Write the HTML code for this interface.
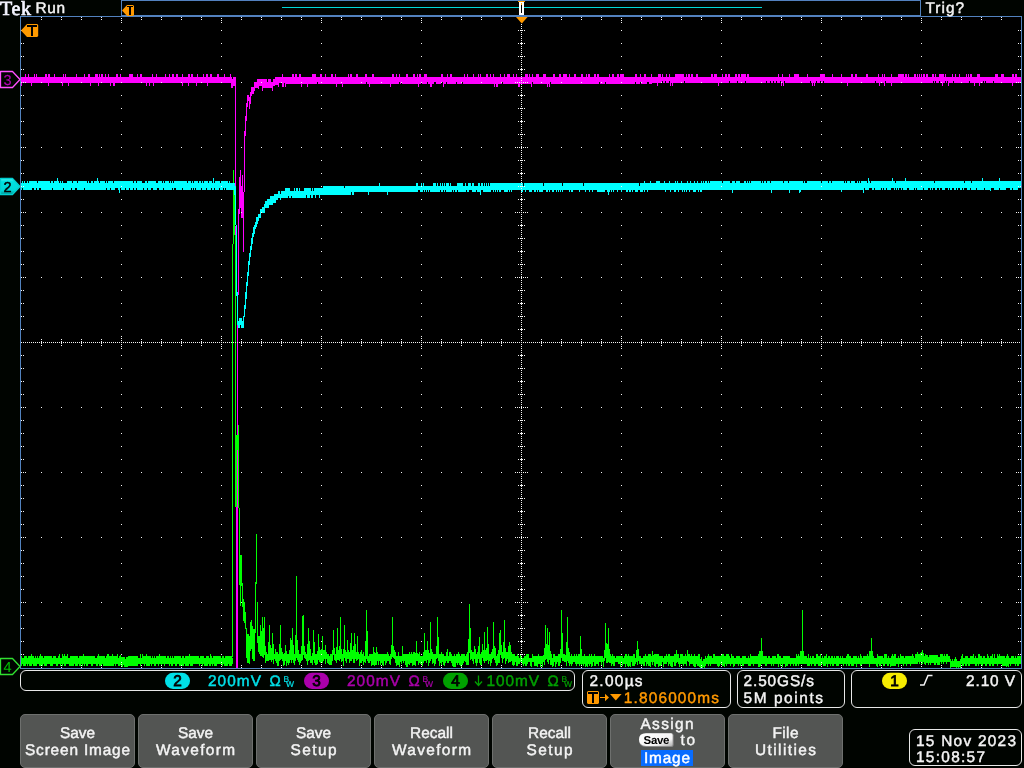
<!DOCTYPE html>
<html><head><meta charset="utf-8"><title>Tek</title>
<style>
html,body{margin:0;padding:0;background:#000400;overflow:hidden}
svg{display:block;font-family:"Liberation Sans",sans-serif;will-change:transform}
</style></head><body>
<svg width="1024" height="768" viewBox="0 0 1024 768" shape-rendering="crispEdges" text-rendering="geometricPrecision">
<rect x="21" y="17" width="1000" height="651" fill="#000"/>
<rect x="122" y="1" width="798" height="14" fill="#000300"/>
<g fill="none" stroke-width="1">
<path stroke="#00ff00" d="M21.5 656V666M22.5 658V664M23.5 658V666M24.5 656V666M25.5 656V666M26.5 656V664M27.5 658V666M28.5 656V664M29.5 656V666M30.5 656V666M31.5 654V666M32.5 656V664M33.5 656V666M34.5 658V666M35.5 656V666M36.5 658V666M37.5 656V664M38.5 658V664M39.5 656V666M40.5 654V666M41.5 656V666M42.5 656V666M43.5 658V664M44.5 656V666M45.5 656V666M46.5 656V666M47.5 656V664M48.5 656V664M49.5 656V664M50.5 656V666M51.5 656V666M52.5 658V666M53.5 656V664M54.5 656V664M55.5 656V664M56.5 658V666M57.5 658V666M58.5 656V664M59.5 654V664M60.5 658V666M61.5 658V664M62.5 654V666M63.5 656V664M64.5 654V666M65.5 656V666M66.5 656V664M67.5 654V664M68.5 658V664M69.5 658V666M70.5 656V666M71.5 656V666M72.5 656V666M73.5 656V666M74.5 656V664M75.5 656V666M76.5 656V666M77.5 656V666M78.5 658V664M79.5 656V666M80.5 656V666M81.5 656V664M82.5 656V666M83.5 654V664M84.5 656V666M85.5 656V664M86.5 656V666M87.5 656V666M88.5 656V664M89.5 656V664M90.5 656V664M91.5 656V666M92.5 656V666M93.5 656V664M94.5 656V664M95.5 658V664M96.5 658V666M97.5 656V666M98.5 654V664M99.5 656V666M100.5 656V666M101.5 656V666M102.5 656V664M103.5 656V666M104.5 656V666M105.5 658V666M106.5 656V666M107.5 654V666M108.5 654V666M109.5 656V666M110.5 656V666M111.5 656V666M112.5 654V666M113.5 656V666M114.5 656V664M115.5 656V666M116.5 656V664M117.5 654V664M118.5 658V666M119.5 656V666M120.5 655V665M121.5 657V667M122.5 657V667M123.5 657V665M124.5 657V667M125.5 659V667M126.5 657V667M127.5 657V667M128.5 656V666M129.5 656V666M130.5 656V666M131.5 656V666M132.5 656V666M133.5 656V666M134.5 656V666M135.5 656V666M136.5 656V666M137.5 656V666M138.5 658V664M139.5 658V664M140.5 654V666M141.5 658V664M142.5 654V664M143.5 656V664M144.5 656V666M145.5 656V664M146.5 654V666M147.5 656V666M148.5 656V666M149.5 656V666M150.5 656V664M151.5 658V666M152.5 656V664M153.5 658V664M154.5 656V666M155.5 658V666M156.5 656V664M157.5 656V664M158.5 656V666M159.5 654V664M160.5 656V664M161.5 656V666M162.5 656V664M163.5 656V664M164.5 656V666M165.5 656V664M166.5 658V664M167.5 656V664M168.5 656V664M169.5 658V666M170.5 656V664M171.5 658V666M172.5 656V666M173.5 658V664M174.5 656V664M175.5 656V666M176.5 656V666M177.5 656V664M178.5 656V664M179.5 656V666M180.5 656V666M181.5 658V666M182.5 656V666M183.5 656V666M184.5 658V664M185.5 656V666M186.5 656V666M187.5 656V666M188.5 656V666M189.5 654V664M190.5 656V666M191.5 656V666M192.5 656V666M193.5 656V664M194.5 656V664M195.5 656V664M196.5 656V664M197.5 656V664M198.5 656V664M199.5 658V666M200.5 656V664M201.5 656V664M202.5 656V666M203.5 656V664M204.5 658V666M205.5 658V666M206.5 656V666M207.5 656V666M208.5 656V664M209.5 658V666M210.5 654V666M211.5 656V664M212.5 658V666M213.5 656V664M214.5 656V666M215.5 656V666M216.5 656V666M217.5 656V664M218.5 656V664M219.5 656V664M220.5 656V664M221.5 658V664M222.5 656V666M223.5 656V664M224.5 658V666M225.5 656V666M226.5 656V666M227.5 656V666M228.5 656V664M229.5 656V666M230.5 656V666M231.5 656V666M232.5 658V664M264.5 617V655M265.5 646V663M266.5 652V661M267.5 654V661M268.5 642V661M269.5 625V660M270.5 645V660M271.5 648V662M272.5 633V660M273.5 644V664M274.5 654V659M275.5 649V661M276.5 652V663M277.5 652V666M278.5 654V666M279.5 644V661M280.5 625V660M281.5 648V659M282.5 652V661M283.5 654V666M284.5 653V665M285.5 645V661M286.5 651V666M287.5 654V663M288.5 654V665M289.5 650V663M290.5 638V660M291.5 640V663M292.5 628V660M293.5 645V663M294.5 654V665M295.5 635V661M296.5 576V658M297.5 640V660M298.5 650V662M299.5 654V665M300.5 654V663M301.5 646V661M302.5 616V660M303.5 615V655M304.5 646V658M305.5 652V659M306.5 654V661M307.5 644V665M308.5 628V661M309.5 641V660M310.5 649V663M311.5 656V663M312.5 653V665M313.5 630V660M314.5 642V663M315.5 654V665M316.5 654V665M317.5 651V664M318.5 634V660M319.5 647V662M320.5 650V663M321.5 649V663M322.5 636V663M323.5 650V661M324.5 650V659M325.5 645V664M326.5 652V659M327.5 654V663M328.5 654V664M329.5 656V665M330.5 654V665M331.5 654V665M332.5 650V661M333.5 630V655M334.5 648V660M335.5 654V661M336.5 647V663M337.5 628V660M338.5 650V660M339.5 646V661M340.5 617V659M341.5 649V662M342.5 654V661M343.5 649V666M344.5 625V658M345.5 650V661M346.5 652V663M347.5 640V659M348.5 650V659M349.5 652V663M350.5 643V661M351.5 633V661M352.5 650V659M353.5 646V663M354.5 633V663M355.5 644V659M356.5 652V661M357.5 636V660M358.5 652V659M359.5 654V666M360.5 652V663M361.5 650V663M362.5 654V661M363.5 652V665M364.5 656V662M365.5 641V663M366.5 610V659M367.5 631V661M368.5 656V663M369.5 654V663M370.5 654V661M371.5 654V666M372.5 654V665M373.5 647V665M374.5 652V666M375.5 653V665M376.5 647V665M377.5 652V661M378.5 654V665M379.5 654V661M380.5 654V665M381.5 654V663M382.5 654V665M383.5 654V666M384.5 654V661M385.5 654V665M386.5 654V663M387.5 652V661M388.5 654V661M389.5 656V664M390.5 654V665M391.5 645V659M392.5 617V657M393.5 646V658M394.5 650V659M395.5 652V663M396.5 656V666M397.5 656V665M398.5 652V665M399.5 656V667M400.5 656V662M401.5 656V664M402.5 646V661M403.5 654V663M404.5 654V661M405.5 654V665M406.5 654V667M407.5 654V667M408.5 654V664M409.5 652V665M410.5 654V663M411.5 652V663M412.5 654V666M413.5 652V665M414.5 652V665M415.5 653V666M416.5 641V661M417.5 653V661M418.5 654V665M419.5 652V663M420.5 656V664M421.5 656V665M422.5 656V666M423.5 652V663M424.5 633V661M425.5 650V661M426.5 650V663M427.5 641V660M428.5 650V666M429.5 653V663M430.5 622V661M431.5 649V659M432.5 652V664M433.5 654V663M434.5 654V666M435.5 654V664M436.5 646V659M437.5 617V658M438.5 637V661M439.5 654V666M440.5 654V663M441.5 652V665M442.5 654V662M443.5 654V665M444.5 656V666M445.5 656V663M446.5 652V661M447.5 649V663M448.5 656V663M449.5 652V661M450.5 652V661M451.5 654V663M452.5 656V666M453.5 656V667M454.5 654V667M455.5 656V667M456.5 654V663M457.5 654V665M458.5 652V663M459.5 654V665M460.5 656V666M461.5 654V667M462.5 654V665M463.5 654V663M464.5 654V661M465.5 656V662M466.5 654V665M467.5 652V665M468.5 639V665M469.5 604V653M470.5 628V660M471.5 650V659M472.5 652V661M473.5 652V664M474.5 646V659M475.5 649V663M476.5 654V666M477.5 652V663M478.5 646V659M479.5 637V663M480.5 654V665M481.5 652V665M482.5 644V658M483.5 650V661M484.5 632V663M485.5 650V661M486.5 648V661M487.5 627V660M488.5 644V664M489.5 654V661M490.5 654V666M491.5 652V663M492.5 649V659M493.5 622V658M494.5 646V660M495.5 648V663M496.5 656V666M497.5 654V665M498.5 650V663M499.5 633V663M500.5 630V655M501.5 645V658M502.5 652V663M503.5 642V659M504.5 620V658M505.5 648V664M506.5 652V661M507.5 652V659M508.5 646V663M509.5 642V662M510.5 645V662M511.5 652V661M512.5 654V665M513.5 654V666M514.5 654V665M515.5 656V662M516.5 656V666M517.5 654V666M518.5 656V664M519.5 658V664M520.5 654V662M521.5 656V662M522.5 658V664M523.5 658V666M524.5 656V664M525.5 656V666M526.5 654V666M527.5 654V664M528.5 654V662M529.5 658V662M530.5 658V666M531.5 658V667M532.5 654V662M533.5 656V662M534.5 656V666M535.5 656V666M536.5 656V666M537.5 656V667M538.5 654V664M539.5 656V664M540.5 656V667M541.5 656V664M542.5 656V667M543.5 655V662M544.5 648V665M545.5 625V660M546.5 644V659M547.5 628V662M548.5 645V664M549.5 632V660M550.5 651V665M551.5 654V665M552.5 658V667M553.5 654V666M554.5 654V662M555.5 656V667M556.5 656V664M557.5 656V662M558.5 654V666M559.5 654V666M560.5 649V663M561.5 610V658M562.5 633V661M563.5 654V661M564.5 654V662M565.5 655V662M566.5 642V666M567.5 617V661M568.5 648V663M569.5 652V666M570.5 656V664M571.5 654V666M572.5 656V664M573.5 656V662M574.5 654V662M575.5 656V664M576.5 654V666M577.5 656V664M578.5 654V664M579.5 654V666M580.5 636V664M581.5 649V665M582.5 656V664M583.5 656V666M584.5 654V664M585.5 656V667M586.5 656V666M587.5 656V667M588.5 656V664M589.5 654V666M590.5 656V664M591.5 654V667M592.5 656V666M593.5 656V662M594.5 654V666M595.5 656V666M596.5 656V664M597.5 656V664M598.5 656V666M599.5 656V662M600.5 656V662M601.5 656V666M602.5 656V662M603.5 658V667M604.5 650V661M605.5 623V658M606.5 643V663M607.5 644V663M608.5 628V662M609.5 649V663M610.5 654V663M611.5 656V666M612.5 654V664M613.5 656V666M614.5 656V666M615.5 658V662M616.5 656V662M617.5 656V662M618.5 656V664M619.5 656V664M620.5 656V667M621.5 656V662M622.5 656V666M623.5 658V664M624.5 656V664M625.5 654V667M626.5 654V664M627.5 656V666M628.5 654V667M629.5 656V666M630.5 656V667M631.5 656V662M632.5 656V666M633.5 654V666M634.5 654V666M635.5 658V664M636.5 650V662M637.5 641V665M638.5 649V661M639.5 656V664M640.5 656V664M641.5 658V666M642.5 658V664M643.5 656V666M644.5 656V666M645.5 654V662M646.5 656V666M647.5 656V664M648.5 654V666M649.5 654V666M650.5 654V667M651.5 656V662M652.5 651V665M653.5 655V662M654.5 654V666M655.5 654V667M656.5 654V664M657.5 654V664M658.5 654V667M659.5 656V666M660.5 656V666M661.5 656V666M662.5 656V662M663.5 658V667M664.5 656V664M665.5 656V664M666.5 654V664M667.5 656V662M668.5 654V666M669.5 654V664M670.5 656V666M671.5 656V667M672.5 656V667M673.5 656V662M674.5 654V666M675.5 654V666M676.5 650V663M677.5 654V662M678.5 654V664M679.5 658V667M680.5 654V664M681.5 654V664M682.5 654V664M683.5 656V666M684.5 656V664M685.5 654V664M686.5 656V666M687.5 650V661M688.5 654V662M689.5 654V666M690.5 656V664M691.5 654V664M692.5 656V664M693.5 656V666M694.5 654V667M695.5 656V667M696.5 656V664M697.5 656V666M698.5 654V666M699.5 654V667M700.5 659V668M701.5 657V667M702.5 661V668M703.5 659V667M704.5 659V668M705.5 656V666M706.5 658V664M707.5 656V664M708.5 654V666M709.5 656V664M710.5 656V666M711.5 656V664M712.5 658V664M713.5 654V664M714.5 654V664M715.5 656V664M716.5 656V664M717.5 656V666M718.5 656V667M719.5 656V666M720.5 656V664M721.5 654V664M722.5 654V666M723.5 654V666M724.5 656V667M725.5 656V664M726.5 654V666M727.5 654V664M728.5 654V664M729.5 656V664M730.5 658V666M731.5 654V664M732.5 656V664M733.5 656V667M734.5 658V666M735.5 658V664M736.5 656V664M737.5 656V664M738.5 656V666M739.5 656V664M740.5 658V666M741.5 658V664M742.5 656V666M743.5 656V666M744.5 656V664M745.5 656V664M746.5 658V664M747.5 658V664M748.5 656V666M749.5 658V666M750.5 654V666M751.5 656V664M752.5 656V664M753.5 656V666M754.5 656V664M755.5 656V664M756.5 656V664M757.5 656V664M758.5 654V667M759.5 651V667M760.5 651V666M761.5 638V664M762.5 651V664M763.5 656V664M764.5 656V664M765.5 656V666M766.5 656V666M767.5 658V664M768.5 656V664M769.5 656V664M770.5 658V664M771.5 658V666M772.5 656V664M773.5 656V666M774.5 656V664M775.5 656V664M776.5 658V664M777.5 654V664M778.5 654V667M779.5 656V664M780.5 656V666M781.5 658V664M782.5 658V667M783.5 656V664M784.5 656V664M785.5 656V667M786.5 656V666M787.5 656V666M788.5 656V664M789.5 656V664M790.5 658V666M791.5 658V664M792.5 658V664M793.5 658V666M794.5 658V664M795.5 658V666M796.5 654V666M797.5 656V664M798.5 654V666M799.5 656V664M800.5 651V664M801.5 651V664M802.5 610V664M803.5 651V664M804.5 656V664M805.5 656V664M806.5 656V664M807.5 658V666M808.5 654V666M809.5 658V666M810.5 656V664M811.5 658V666M812.5 656V664M813.5 656V664M814.5 658V666M815.5 658V666M816.5 654V664M817.5 654V664M818.5 656V666M819.5 656V666M820.5 654V666M821.5 658V664M822.5 656V664M823.5 658V666M824.5 656V666M825.5 656V666M826.5 654V664M827.5 658V667M828.5 656V664M829.5 656V664M830.5 658V666M831.5 656V664M832.5 656V666M833.5 658V666M834.5 656V664M835.5 658V664M836.5 656V666M837.5 656V666M838.5 656V666M839.5 658V664M840.5 656V664M841.5 658V664M842.5 656V664M843.5 658V666M844.5 658V664M845.5 658V664M846.5 656V666M847.5 654V664M848.5 654V666M849.5 656V666M850.5 656V664M851.5 658V666M852.5 658V666M853.5 656V666M854.5 656V664M855.5 656V664M856.5 656V667M857.5 658V664M858.5 656V664M859.5 658V664M860.5 654V666M861.5 656V666M862.5 658V664M863.5 656V664M864.5 656V664M865.5 656V664M866.5 656V664M867.5 654V664M868.5 656V664M869.5 651V667M870.5 651V664M871.5 638V664M872.5 651V664M873.5 656V664M874.5 658V664M875.5 658V664M876.5 658V666M877.5 654V667M878.5 656V664M879.5 656V666M880.5 656V666M881.5 656V664M882.5 656V664M883.5 658V666M884.5 654V666M885.5 654V664M886.5 654V664M887.5 658V666M888.5 656V666M889.5 658V664M890.5 658V667M891.5 656V666M892.5 654V666M893.5 656V666M894.5 654V666M895.5 654V666M896.5 658V664M897.5 658V664M898.5 656V667M899.5 658V664M900.5 654V664M901.5 656V664M902.5 656V664M903.5 656V666M904.5 658V664M905.5 656V664M906.5 656V666M907.5 656V664M908.5 656V664M909.5 656V664M910.5 656V666M911.5 656V664M912.5 654V664M913.5 656V664M914.5 658V664M915.5 654V664M916.5 654V664M917.5 652V664M918.5 654V662M919.5 654V664M920.5 653V662M921.5 652V664M922.5 650V664M923.5 653V662M924.5 656V664M925.5 654V665M926.5 655V663M927.5 655V663M928.5 657V665M929.5 655V663M930.5 655V665M931.5 655V663M932.5 655V663M933.5 655V663M934.5 655V665M935.5 655V665M936.5 655V663M937.5 655V665M938.5 657V665M939.5 657V665M940.5 654V662M941.5 654V664M942.5 654V662M943.5 656V664M944.5 654V662M945.5 656V662M946.5 654V664M947.5 654V662M948.5 656V662M949.5 656V662M950.5 659V668M951.5 661V667M952.5 659V667M953.5 661V667M954.5 659V667M955.5 657V667M956.5 659V668M957.5 661V667M958.5 661V668M959.5 661V667M960.5 659V668M961.5 656V664M962.5 654V666M963.5 658V666M964.5 658V664M965.5 656V666M966.5 656V666M967.5 656V664M968.5 658V666M969.5 658V666M970.5 656V664M971.5 656V664M972.5 656V664M973.5 654V664M974.5 658V664M975.5 656V666M976.5 658V666M977.5 658V664M978.5 654V666M979.5 654V664M980.5 656V664M981.5 656V666M982.5 658V666M983.5 656V664M984.5 656V664M985.5 658V666M986.5 658V666M987.5 654V664M988.5 656V664M989.5 658V666M990.5 656V666M991.5 656V664M992.5 654V666M993.5 658V666M994.5 654V664M995.5 658V664M996.5 658V664M997.5 654V666M998.5 656V664M999.5 654V664M1000.5 656V664M1001.5 656V664M1002.5 656V666M1003.5 656V666M1004.5 656V666M1005.5 658V666M1006.5 656V667M1007.5 654V666M1008.5 656V667M1009.5 658V664M1010.5 658V666M1011.5 656V664M1012.5 656V664M1013.5 656V664M1014.5 658V664M1015.5 656V666M1016.5 658V664M1017.5 656V666M1018.5 656V666M1019.5 656V664M1020.5 656V664M239.5 508V585M240.5 555V606M241.5 555V586M242.5 583V607M243.5 599V621M244.5 602V623M245.5 612V629M246.5 628V658M247.5 634V663M248.5 634V663M249.5 636V664M250.5 622V651M251.5 620V649M252.5 626V659M253.5 629V661M254.5 629V661M255.5 582V633M256.5 534V584M257.5 602V643M258.5 636V652M259.5 636V654M260.5 625V656M261.5 631V656M262.5 617V657M263.5 628V658M233.5 170V244M234.5 195V235M232.5 244V657M235.5 235V507M236.5 435V507M237.5 435V451M238.5 425V508"/>
<path stroke="#ff00ff" d="M21.5 77V86M22.5 77V83M23.5 77V83M24.5 77V83M25.5 74V83M26.5 77V83M27.5 77V83M28.5 74V83M29.5 77V83M30.5 77V83M31.5 77V86M32.5 77V83M33.5 77V83M34.5 74V83M35.5 77V83M36.5 74V83M37.5 77V83M38.5 77V83M39.5 77V83M40.5 77V83M41.5 77V83M42.5 77V83M43.5 77V83M44.5 77V83M45.5 74V83M46.5 74V83M47.5 77V83M48.5 74V86M49.5 74V83M50.5 77V83M51.5 77V83M52.5 77V83M53.5 77V83M54.5 74V83M55.5 77V83M56.5 77V83M57.5 77V83M58.5 77V83M59.5 77V83M60.5 77V83M61.5 77V83M62.5 77V86M63.5 74V83M64.5 77V83M65.5 74V83M66.5 77V83M67.5 77V83M68.5 77V86M69.5 77V83M70.5 77V83M71.5 77V83M72.5 77V83M73.5 77V83M74.5 77V83M75.5 77V83M76.5 74V83M77.5 77V83M78.5 77V83M79.5 77V83M80.5 77V83M81.5 77V83M82.5 77V83M83.5 77V83M84.5 74V83M85.5 77V83M86.5 77V83M87.5 77V83M88.5 74V83M89.5 74V83M90.5 77V86M91.5 77V83M92.5 77V83M93.5 77V83M94.5 77V83M95.5 74V83M96.5 74V83M97.5 74V83M98.5 77V86M99.5 74V83M100.5 77V83M101.5 74V83M102.5 74V83M103.5 77V83M104.5 77V83M105.5 74V83M106.5 77V83M107.5 77V83M108.5 74V83M109.5 77V83M110.5 77V86M111.5 77V83M112.5 77V83M113.5 77V86M114.5 77V86M115.5 77V83M116.5 74V83M117.5 74V83M118.5 77V83M119.5 77V83M120.5 74V83M121.5 77V83M122.5 77V83M123.5 77V83M124.5 77V83M125.5 77V83M126.5 77V83M127.5 77V83M128.5 77V83M129.5 74V83M130.5 74V83M131.5 74V83M132.5 74V83M133.5 77V83M134.5 77V83M135.5 77V83M136.5 77V83M137.5 74V83M138.5 77V83M139.5 77V83M140.5 74V83M141.5 74V83M142.5 77V83M143.5 77V83M144.5 77V83M145.5 77V83M146.5 77V86M147.5 77V83M148.5 77V83M149.5 77V86M150.5 77V83M151.5 77V83M152.5 74V83M153.5 77V86M154.5 77V83M155.5 77V83M156.5 74V83M157.5 77V83M158.5 77V83M159.5 77V83M160.5 77V83M161.5 77V83M162.5 77V83M163.5 77V83M164.5 77V83M165.5 74V83M166.5 77V83M167.5 77V83M168.5 77V83M169.5 74V83M170.5 77V83M171.5 77V83M172.5 74V83M173.5 74V83M174.5 77V83M175.5 77V83M176.5 74V83M177.5 74V83M178.5 77V83M179.5 77V83M180.5 77V83M181.5 77V83M182.5 74V86M183.5 77V83M184.5 77V83M185.5 77V83M186.5 77V83M187.5 77V83M188.5 74V86M189.5 74V83M190.5 77V83M191.5 74V83M192.5 74V83M193.5 77V83M194.5 77V83M195.5 77V83M196.5 77V86M197.5 74V83M198.5 77V83M199.5 77V83M200.5 77V83M201.5 77V83M202.5 77V83M203.5 74V83M204.5 77V83M205.5 77V83M206.5 74V83M207.5 74V86M208.5 77V83M209.5 77V83M210.5 74V83M211.5 74V83M212.5 77V83M213.5 77V83M214.5 77V83M215.5 77V83M216.5 77V83M217.5 74V83M218.5 74V83M219.5 77V83M220.5 77V83M221.5 77V83M222.5 77V83M223.5 77V83M224.5 74V83M225.5 77V83M226.5 77V83M227.5 77V83M228.5 77V83M229.5 77V83M230.5 74V83M231.5 77V88M232.5 79V88M233.5 77V86M234.5 77V86M235.5 82V98M244.5 131V192M245.5 116V136M246.5 103V121M247.5 95V107M248.5 95V101M249.5 97V109M250.5 92V104M251.5 87V96M252.5 87V94M253.5 87V94M254.5 82V91M255.5 82V88M256.5 82V88M257.5 79V88M258.5 79V89M259.5 79V86M260.5 79V86M261.5 79V86M262.5 79V91M263.5 79V88M264.5 79V88M265.5 79V88M266.5 79V88M267.5 82V88M268.5 79V88M269.5 79V88M270.5 79V88M271.5 82V88M272.5 82V91M273.5 79V86M274.5 79V86M275.5 77V85M276.5 77V85M277.5 77V85M278.5 77V87M279.5 77V83M280.5 77V83M281.5 77V83M282.5 74V87M283.5 77V87M284.5 77V83M285.5 77V87M286.5 77V84M287.5 77V84M288.5 77V84M289.5 77V84M290.5 77V84M291.5 77V84M292.5 74V84M293.5 74V84M294.5 77V84M295.5 74V84M296.5 74V84M297.5 77V84M298.5 77V84M299.5 74V84M300.5 74V84M301.5 77V87M302.5 77V84M303.5 77V84M304.5 77V84M305.5 77V84M306.5 77V84M307.5 77V87M308.5 77V84M309.5 77V84M310.5 77V84M311.5 77V84M312.5 74V84M313.5 74V84M314.5 74V84M315.5 74V84M316.5 77V84M317.5 77V82M318.5 77V84M319.5 77V84M320.5 74V84M321.5 74V84M322.5 77V84M323.5 77V84M324.5 77V84M325.5 74V84M326.5 77V84M327.5 77V84M328.5 77V84M329.5 77V84M330.5 77V84M331.5 74V84M332.5 74V84M333.5 77V84M334.5 77V84M335.5 74V84M336.5 77V87M337.5 77V84M338.5 77V84M339.5 77V84M340.5 77V84M341.5 77V84M342.5 77V87M343.5 77V84M344.5 77V84M345.5 77V84M346.5 77V84M347.5 77V84M348.5 74V84M349.5 77V84M350.5 74V84M351.5 74V84M352.5 77V84M353.5 77V84M354.5 77V84M355.5 77V84M356.5 74V84M357.5 74V84M358.5 77V84M359.5 77V84M360.5 77V84M361.5 77V84M362.5 77V84M363.5 77V84M364.5 77V84M365.5 74V84M366.5 74V82M367.5 77V84M368.5 77V84M369.5 77V87M370.5 77V84M371.5 77V84M372.5 74V84M373.5 74V84M374.5 77V84M375.5 77V84M376.5 77V84M377.5 77V84M378.5 77V84M379.5 77V84M380.5 77V84M381.5 77V84M382.5 77V84M383.5 77V84M384.5 77V84M385.5 77V84M386.5 77V84M387.5 77V84M388.5 77V84M389.5 77V84M390.5 77V87M391.5 77V84M392.5 74V84M393.5 74V84M394.5 77V84M395.5 77V84M396.5 74V84M397.5 77V84M398.5 77V84M399.5 74V82M400.5 77V84M401.5 77V82M402.5 77V84M403.5 77V84M404.5 77V84M405.5 77V84M406.5 74V84M407.5 74V84M408.5 77V84M409.5 77V84M410.5 77V84M411.5 77V84M412.5 77V84M413.5 74V84M414.5 74V84M415.5 77V84M416.5 77V84M417.5 74V84M418.5 77V87M419.5 74V84M420.5 74V84M421.5 77V82M422.5 77V84M423.5 77V84M424.5 74V84M425.5 74V84M426.5 74V84M427.5 77V82M428.5 77V84M429.5 77V84M430.5 77V87M431.5 77V87M432.5 77V84M433.5 77V84M434.5 77V82M435.5 77V82M436.5 77V84M437.5 77V84M438.5 77V84M439.5 77V84M440.5 77V84M441.5 74V82M442.5 74V82M443.5 77V87M444.5 77V84M445.5 77V84M446.5 77V82M447.5 74V84M448.5 77V84M449.5 77V84M450.5 74V84M451.5 74V84M452.5 77V84M453.5 77V84M454.5 77V84M455.5 77V84M456.5 77V82M457.5 77V84M458.5 77V84M459.5 77V84M460.5 77V84M461.5 77V84M462.5 77V82M463.5 77V84M464.5 74V84M465.5 77V84M466.5 77V84M467.5 74V84M468.5 77V84M469.5 77V84M470.5 77V84M471.5 77V84M472.5 77V84M473.5 74V84M474.5 77V84M475.5 77V84M476.5 77V84M477.5 77V84M478.5 74V84M479.5 77V84M480.5 74V84M481.5 77V84M482.5 77V84M483.5 77V84M484.5 77V84M485.5 77V84M486.5 74V84M487.5 74V84M488.5 77V84M489.5 77V84M490.5 74V84M491.5 77V84M492.5 77V84M493.5 74V84M494.5 77V87M495.5 77V84M496.5 77V87M497.5 77V87M498.5 77V84M499.5 77V84M500.5 74V84M501.5 77V84M502.5 77V82M503.5 77V84M504.5 74V84M505.5 77V84M506.5 77V84M507.5 74V84M508.5 74V84M509.5 74V84M510.5 77V84M511.5 77V84M512.5 77V84M513.5 74V84M514.5 77V84M515.5 77V84M516.5 74V84M517.5 77V84M518.5 77V87M519.5 77V87M520.5 77V84M521.5 77V84M522.5 77V84M523.5 77V84M524.5 77V84M525.5 74V84M526.5 74V84M527.5 74V84M528.5 77V84M529.5 74V84M530.5 77V84M531.5 77V87M532.5 74V82M533.5 77V84M534.5 77V84M535.5 77V84M536.5 74V84M537.5 74V84M538.5 74V84M539.5 77V84M540.5 77V84M541.5 77V84M542.5 77V84M543.5 74V84M544.5 74V84M545.5 74V84M546.5 77V84M547.5 77V87M548.5 77V84M549.5 77V87M550.5 77V82M551.5 77V84M552.5 77V84M553.5 74V84M554.5 74V84M555.5 77V84M556.5 77V84M557.5 77V84M558.5 77V84M559.5 74V84M560.5 74V84M561.5 77V84M562.5 77V84M563.5 74V84M564.5 74V84M565.5 74V84M566.5 74V84M567.5 77V84M568.5 77V84M569.5 74V84M570.5 77V84M571.5 77V84M572.5 77V84M573.5 77V84M574.5 74V84M575.5 74V84M576.5 77V84M577.5 77V84M578.5 77V84M579.5 77V84M580.5 77V84M581.5 74V84M582.5 74V84M583.5 77V84M584.5 77V84M585.5 77V84M586.5 74V84M587.5 77V84M588.5 74V84M589.5 74V84M590.5 77V84M591.5 77V84M592.5 77V84M593.5 77V84M594.5 74V84M595.5 74V84M596.5 77V84M597.5 74V84M598.5 74V84M599.5 77V82M600.5 77V84M601.5 77V84M602.5 77V84M603.5 77V84M604.5 77V84M605.5 77V82M606.5 77V84M607.5 77V84M608.5 77V84M609.5 74V84M610.5 77V84M611.5 77V84M612.5 74V84M613.5 74V84M614.5 77V84M615.5 77V84M616.5 77V84M617.5 74V84M618.5 74V84M619.5 77V84M620.5 74V84M621.5 74V84M622.5 74V84M623.5 74V84M624.5 77V84M625.5 77V84M626.5 77V84M627.5 77V84M628.5 77V84M629.5 77V84M630.5 77V84M631.5 77V84M632.5 77V84M633.5 77V84M634.5 77V84M635.5 74V82M636.5 74V84M637.5 77V84M638.5 77V84M639.5 77V84M640.5 74V82M641.5 77V84M642.5 77V84M643.5 77V84M644.5 74V84M645.5 74V84M646.5 77V84M647.5 77V82M648.5 77V82M649.5 77V84M650.5 77V84M651.5 74V84M652.5 77V83M653.5 77V83M654.5 77V83M655.5 77V83M656.5 77V83M657.5 77V86M658.5 74V83M659.5 74V83M660.5 74V83M661.5 77V83M662.5 74V81M663.5 77V83M664.5 77V83M665.5 77V81M666.5 74V83M667.5 77V83M668.5 77V83M669.5 74V81M670.5 77V86M671.5 77V83M672.5 77V86M673.5 77V83M674.5 77V83M675.5 74V83M676.5 74V83M677.5 74V83M678.5 74V83M679.5 74V83M680.5 74V83M681.5 74V83M682.5 74V83M683.5 74V83M684.5 77V81M685.5 77V83M686.5 74V83M687.5 77V83M688.5 74V83M689.5 74V83M690.5 77V83M691.5 74V83M692.5 74V83M693.5 77V83M694.5 77V83M695.5 77V83M696.5 74V83M697.5 74V83M698.5 77V83M699.5 77V83M700.5 77V83M701.5 77V83M702.5 77V83M703.5 77V83M704.5 77V83M705.5 77V83M706.5 77V83M707.5 77V83M708.5 77V83M709.5 77V83M710.5 77V83M711.5 74V83M712.5 74V83M713.5 77V83M714.5 74V83M715.5 74V83M716.5 74V83M717.5 77V83M718.5 77V86M719.5 77V83M720.5 77V83M721.5 77V83M722.5 74V83M723.5 77V83M724.5 77V83M725.5 74V83M726.5 74V83M727.5 77V83M728.5 74V83M729.5 74V81M730.5 77V83M731.5 77V83M732.5 77V83M733.5 77V83M734.5 77V83M735.5 74V83M736.5 74V83M737.5 77V81M738.5 74V83M739.5 74V83M740.5 77V83M741.5 74V83M742.5 74V83M743.5 74V83M744.5 74V83M745.5 74V81M746.5 77V83M747.5 74V83M748.5 74V83M749.5 77V83M750.5 77V83M751.5 77V83M752.5 77V83M753.5 77V83M754.5 77V83M755.5 77V83M756.5 77V83M757.5 77V83M758.5 77V83M759.5 77V83M760.5 77V83M761.5 77V83M762.5 77V83M763.5 77V83M764.5 77V83M765.5 77V83M766.5 77V81M767.5 77V83M768.5 77V83M769.5 77V83M770.5 77V81M771.5 77V83M772.5 77V83M773.5 77V81M774.5 77V83M775.5 77V83M776.5 77V81M777.5 77V83M778.5 74V83M779.5 77V83M780.5 77V81M781.5 77V86M782.5 74V83M783.5 77V86M784.5 77V81M785.5 77V83M786.5 77V83M787.5 77V83M788.5 77V83M789.5 74V83M790.5 77V83M791.5 77V83M792.5 77V83M793.5 77V83M794.5 74V83M795.5 74V83M796.5 74V83M797.5 74V83M798.5 74V83M799.5 77V83M800.5 77V83M801.5 77V83M802.5 77V83M803.5 77V83M804.5 77V83M805.5 77V83M806.5 77V83M807.5 74V83M808.5 77V83M809.5 77V83M810.5 77V81M811.5 77V83M812.5 77V86M813.5 77V83M814.5 77V86M815.5 77V83M816.5 77V81M817.5 77V83M818.5 77V83M819.5 77V83M820.5 74V81M821.5 74V83M822.5 74V83M823.5 74V81M824.5 74V83M825.5 77V83M826.5 77V83M827.5 77V83M828.5 77V83M829.5 77V83M830.5 77V83M831.5 77V83M832.5 74V83M833.5 77V83M834.5 77V83M835.5 77V83M836.5 77V83M837.5 77V83M838.5 77V83M839.5 77V83M840.5 77V83M841.5 74V83M842.5 77V83M843.5 77V83M844.5 77V83M845.5 77V83M846.5 77V83M847.5 77V86M848.5 77V83M849.5 77V83M850.5 77V83M851.5 74V83M852.5 74V83M853.5 77V83M854.5 77V83M855.5 74V83M856.5 74V83M857.5 77V83M858.5 77V83M859.5 77V83M860.5 77V83M861.5 77V83M862.5 77V83M863.5 77V83M864.5 77V83M865.5 77V83M866.5 74V83M867.5 74V83M868.5 77V83M869.5 77V83M870.5 77V83M871.5 77V83M872.5 77V83M873.5 77V83M874.5 77V83M875.5 77V81M876.5 77V83M877.5 77V83M878.5 74V83M879.5 77V86M880.5 77V83M881.5 77V83M882.5 74V83M883.5 77V83M884.5 74V86M885.5 77V81M886.5 77V83M887.5 77V83M888.5 77V83M889.5 77V83M890.5 77V83M891.5 74V86M892.5 77V83M893.5 77V83M894.5 77V83M895.5 77V83M896.5 77V83M897.5 77V83M898.5 74V83M899.5 74V83M900.5 74V83M901.5 74V83M902.5 74V83M903.5 74V83M904.5 77V83M905.5 74V83M906.5 74V83M907.5 77V83M908.5 74V83M909.5 77V83M910.5 77V83M911.5 77V83M912.5 77V83M913.5 77V83M914.5 74V83M915.5 74V83M916.5 77V83M917.5 74V83M918.5 77V83M919.5 74V83M920.5 77V83M921.5 74V83M922.5 77V83M923.5 74V83M924.5 74V83M925.5 77V83M926.5 74V83M927.5 74V83M928.5 77V83M929.5 77V83M930.5 77V83M931.5 77V83M932.5 74V83M933.5 74V81M934.5 77V83M935.5 74V81M936.5 77V83M937.5 77V83M938.5 77V83M939.5 74V81M940.5 74V83M941.5 74V83M942.5 74V86M943.5 74V83M944.5 77V83M945.5 74V81M946.5 77V83M947.5 77V81M948.5 77V86M949.5 77V83M950.5 77V83M951.5 77V83M952.5 74V83M953.5 77V81M954.5 77V83M955.5 74V83M956.5 77V83M957.5 77V83M958.5 77V83M959.5 74V83M960.5 77V83M961.5 77V83M962.5 77V83M963.5 77V83M964.5 77V83M965.5 77V83M966.5 74V83M967.5 77V83M968.5 74V83M969.5 77V81M970.5 74V83M971.5 74V83M972.5 77V83M973.5 77V83M974.5 77V86M975.5 77V83M976.5 77V83M977.5 74V83M978.5 74V83M979.5 74V86M980.5 77V83M981.5 77V83M982.5 77V83M983.5 77V81M984.5 77V83M985.5 77V81M986.5 77V83M987.5 77V83M988.5 77V83M989.5 77V83M990.5 77V83M991.5 77V83M992.5 77V83M993.5 77V81M994.5 77V83M995.5 74V83M996.5 74V83M997.5 74V83M998.5 77V83M999.5 77V83M1000.5 77V83M1001.5 74V83M1002.5 74V83M1003.5 74V83M1004.5 77V83M1005.5 77V83M1006.5 77V83M1007.5 77V83M1008.5 77V83M1009.5 77V83M1010.5 77V83M1011.5 77V83M1012.5 74V86M1013.5 74V83M1014.5 77V83M1015.5 74V83M1016.5 74V83M1017.5 77V83M1018.5 77V83M1019.5 77V83M1020.5 77V83M235.5 77V186M235.5 226V235M244.5 131V192M238.5 209V295M239.5 177V214M240.5 170V208M241.5 186V218M242.5 175V218M243.5 192V252M237.5 325V435M237.5 450V669M236.5 507V669"/>
<path stroke="#00ffff" d="M21.5 183V190M22.5 181V188M23.5 183V190M24.5 181V190M25.5 183V190M26.5 183V190M27.5 181V190M28.5 183V190M29.5 181V190M30.5 181V190M31.5 181V190M32.5 181V188M33.5 181V188M34.5 181V190M35.5 181V190M36.5 181V188M37.5 183V190M38.5 181V190M39.5 181V188M40.5 181V188M41.5 181V190M42.5 181V190M43.5 181V190M44.5 181V190M45.5 181V190M46.5 181V190M47.5 181V190M48.5 181V190M49.5 181V190M50.5 183V190M51.5 181V190M52.5 181V188M53.5 183V190M54.5 181V190M55.5 181V190M56.5 181V190M57.5 178V190M58.5 181V190M59.5 183V190M60.5 181V190M61.5 183V190M62.5 181V190M63.5 183V188M64.5 183V190M65.5 183V190M66.5 183V190M67.5 181V190M68.5 181V190M69.5 181V190M70.5 181V190M71.5 181V188M72.5 183V190M73.5 181V190M74.5 181V190M75.5 181V188M76.5 181V188M77.5 183V190M78.5 181V190M79.5 181V190M80.5 181V190M81.5 181V190M82.5 181V190M83.5 181V190M84.5 181V188M85.5 181V190M86.5 181V190M87.5 183V190M88.5 181V190M89.5 183V190M90.5 183V190M91.5 181V190M92.5 181V190M93.5 183V190M94.5 181V190M95.5 181V190M96.5 181V190M97.5 178V190M98.5 181V190M99.5 183V190M100.5 181V190M101.5 181V190M102.5 181V190M103.5 181V190M104.5 181V190M105.5 183V190M106.5 181V188M107.5 183V190M108.5 181V190M109.5 181V190M110.5 181V188M111.5 181V190M112.5 181V190M113.5 183V190M114.5 181V190M115.5 181V188M116.5 181V188M117.5 181V188M118.5 181V190M119.5 181V193M120.5 181V188M121.5 181V190M122.5 181V190M123.5 181V190M124.5 181V190M125.5 181V188M126.5 181V190M127.5 181V190M128.5 181V190M129.5 181V188M130.5 181V190M131.5 181V190M132.5 181V190M133.5 183V188M134.5 181V190M135.5 181V190M136.5 183V188M137.5 181V190M138.5 181V190M139.5 181V190M140.5 181V190M141.5 181V190M142.5 183V190M143.5 183V188M144.5 183V190M145.5 181V190M146.5 181V190M147.5 183V188M148.5 181V190M149.5 181V190M150.5 181V190M151.5 181V188M152.5 181V188M153.5 181V190M154.5 181V190M155.5 181V190M156.5 183V190M157.5 183V188M158.5 181V188M159.5 181V190M160.5 181V190M161.5 181V190M162.5 183V190M163.5 181V188M164.5 183V190M165.5 181V190M166.5 181V190M167.5 181V190M168.5 181V190M169.5 183V190M170.5 181V190M171.5 183V190M172.5 181V188M173.5 183V190M174.5 181V188M175.5 181V188M176.5 181V190M177.5 181V190M178.5 181V190M179.5 181V190M180.5 181V190M181.5 181V190M182.5 181V188M183.5 181V190M184.5 181V190M185.5 181V190M186.5 181V190M187.5 183V190M188.5 181V190M189.5 181V190M190.5 181V190M191.5 183V188M192.5 181V190M193.5 183V188M194.5 181V190M195.5 181V188M196.5 181V190M197.5 181V190M198.5 183V190M199.5 181V190M200.5 181V190M201.5 183V188M202.5 181V190M203.5 183V190M204.5 181V190M205.5 181V190M206.5 181V188M207.5 181V190M208.5 183V190M209.5 181V190M210.5 181V190M211.5 181V188M212.5 183V190M213.5 178V190M214.5 183V188M215.5 181V190M216.5 181V190M217.5 181V190M218.5 181V190M219.5 181V188M220.5 183V190M221.5 181V190M222.5 181V190M223.5 181V188M224.5 181V190M225.5 181V188M226.5 181V190M227.5 181V190M228.5 183V190M229.5 181V190M230.5 183V190M231.5 183V190M232.5 183V190M233.5 183V190M244.5 305V317M245.5 292V309M246.5 282V299M247.5 272V286M248.5 261V276M249.5 253V265M250.5 246V257M251.5 238V250M252.5 233V244M253.5 227V237M254.5 225V234M255.5 222V229M256.5 217V227M257.5 217V224M258.5 214V221M259.5 214V218M260.5 209V218M261.5 209V213M262.5 207V213M263.5 207V213M264.5 204V213M265.5 201V208M266.5 201V208M267.5 199V208M268.5 199V208M269.5 199V205M270.5 196V205M271.5 196V205M272.5 196V205M273.5 196V203M274.5 194V203M275.5 194V203M276.5 194V200M277.5 194V200M278.5 191V198M279.5 191V198M280.5 194V200M281.5 191V198M282.5 191V198M283.5 191V198M284.5 191V198M285.5 188V198M286.5 188V198M287.5 188V198M288.5 188V196M289.5 188V198M290.5 191V198M291.5 191V196M292.5 191V198M293.5 191V198M294.5 188V198M295.5 191V198M296.5 188V198M297.5 188V198M298.5 191V198M299.5 188V198M300.5 191V198M301.5 191V198M302.5 191V198M303.5 191V198M304.5 188V198M305.5 188V198M306.5 188V195M307.5 188V198M308.5 188V198M309.5 188V198M310.5 188V195M311.5 191V198M312.5 188V198M313.5 191V195M314.5 188V195M315.5 188V198M316.5 188V195M317.5 188V195M318.5 188V195M319.5 188V198M320.5 188V195M321.5 188V195M322.5 188V195M323.5 186V195M324.5 186V195M325.5 186V195M326.5 186V195M327.5 186V195M328.5 186V195M329.5 186V195M330.5 186V195M331.5 186V195M332.5 186V195M333.5 186V195M334.5 186V195M335.5 186V195M336.5 186V195M337.5 186V195M338.5 186V195M339.5 186V195M340.5 186V195M341.5 186V195M342.5 186V195M343.5 186V195M344.5 188V195M345.5 186V195M346.5 186V195M347.5 186V195M348.5 186V195M349.5 186V195M350.5 186V195M351.5 186V192M352.5 186V195M353.5 186V195M354.5 186V192M355.5 186V192M356.5 186V192M357.5 186V192M358.5 186V192M359.5 186V192M360.5 186V192M361.5 186V192M362.5 186V192M363.5 186V192M364.5 186V192M365.5 186V192M366.5 186V192M367.5 186V192M368.5 186V195M369.5 186V192M370.5 186V192M371.5 186V192M372.5 186V192M373.5 186V192M374.5 186V192M375.5 186V192M376.5 186V192M377.5 186V192M378.5 186V192M379.5 183V192M380.5 186V192M381.5 186V192M382.5 186V192M383.5 186V192M384.5 186V192M385.5 186V192M386.5 186V192M387.5 186V195M388.5 186V192M389.5 186V192M390.5 186V192M391.5 186V192M392.5 186V192M393.5 186V192M394.5 186V192M395.5 186V192M396.5 186V192M397.5 186V192M398.5 186V192M399.5 186V192M400.5 186V192M401.5 186V192M402.5 186V192M403.5 186V192M404.5 186V192M405.5 186V192M406.5 186V192M407.5 186V192M408.5 186V192M409.5 186V192M410.5 186V192M411.5 186V192M412.5 186V192M413.5 186V192M414.5 186V192M415.5 186V192M416.5 183V192M417.5 183V192M418.5 186V190M419.5 186V190M420.5 186V192M421.5 183V192M422.5 186V192M423.5 183V190M424.5 186V192M425.5 186V190M426.5 186V192M427.5 186V190M428.5 186V192M429.5 186V190M430.5 186V192M431.5 186V192M432.5 186V192M433.5 183V192M434.5 183V192M435.5 183V192M436.5 186V192M437.5 183V192M438.5 186V192M439.5 186V192M440.5 183V190M441.5 186V192M442.5 183V192M443.5 186V190M444.5 183V192M445.5 186V190M446.5 183V192M447.5 183V192M448.5 183V192M449.5 186V192M450.5 183V192M451.5 186V192M452.5 186V190M453.5 186V192M454.5 186V190M455.5 186V192M456.5 186V192M457.5 183V190M458.5 183V192M459.5 183V192M460.5 183V192M461.5 183V192M462.5 183V192M463.5 186V192M464.5 186V192M465.5 183V192M466.5 186V190M467.5 186V192M468.5 183V192M469.5 183V190M470.5 183V190M471.5 186V190M472.5 183V192M473.5 183V192M474.5 186V192M475.5 186V192M476.5 186V190M477.5 186V192M478.5 183V192M479.5 183V192M480.5 186V195M481.5 183V190M482.5 183V190M483.5 186V192M484.5 183V192M485.5 186V192M486.5 183V192M487.5 186V192M488.5 183V192M489.5 186V192M490.5 183V192M491.5 183V190M492.5 183V190M493.5 183V192M494.5 183V190M495.5 183V192M496.5 183V190M497.5 183V192M498.5 183V190M499.5 183V192M500.5 183V192M501.5 183V190M502.5 183V190M503.5 183V190M504.5 183V192M505.5 183V192M506.5 183V192M507.5 183V192M508.5 183V190M509.5 183V192M510.5 183V190M511.5 183V192M512.5 183V190M513.5 183V190M514.5 183V190M515.5 183V190M516.5 183V190M517.5 183V190M518.5 183V190M519.5 183V190M520.5 183V190M521.5 183V192M522.5 183V192M523.5 186V190M524.5 183V190M525.5 183V192M526.5 183V190M527.5 183V190M528.5 183V190M529.5 183V192M530.5 183V192M531.5 183V192M532.5 183V190M533.5 183V190M534.5 183V192M535.5 183V192M536.5 183V190M537.5 183V192M538.5 183V190M539.5 183V192M540.5 183V192M541.5 183V192M542.5 183V192M543.5 186V190M544.5 183V190M545.5 183V190M546.5 183V192M547.5 183V192M548.5 183V190M549.5 183V192M550.5 183V190M551.5 183V190M552.5 183V192M553.5 183V192M554.5 183V190M555.5 183V190M556.5 183V192M557.5 183V190M558.5 183V192M559.5 183V190M560.5 183V192M561.5 183V190M562.5 186V192M563.5 183V190M564.5 183V190M565.5 183V190M566.5 183V190M567.5 183V190M568.5 183V190M569.5 183V192M570.5 183V190M571.5 183V192M572.5 183V192M573.5 183V190M574.5 183V190M575.5 183V190M576.5 183V190M577.5 183V190M578.5 183V190M579.5 183V192M580.5 183V190M581.5 183V190M582.5 183V190M583.5 186V190M584.5 183V190M585.5 183V192M586.5 183V190M587.5 183V190M588.5 183V190M589.5 183V192M590.5 183V190M591.5 183V190M592.5 183V192M593.5 183V190M594.5 183V190M595.5 183V190M596.5 183V190M597.5 183V192M598.5 183V192M599.5 183V192M600.5 183V192M601.5 183V192M602.5 183V192M603.5 183V192M604.5 183V192M605.5 183V190M606.5 183V190M607.5 183V192M608.5 183V195M609.5 183V192M610.5 183V190M611.5 183V192M612.5 183V190M613.5 183V192M614.5 183V190M615.5 183V190M616.5 183V190M617.5 183V192M618.5 183V190M619.5 183V190M620.5 183V190M621.5 183V192M622.5 183V190M623.5 183V190M624.5 183V190M625.5 183V190M626.5 183V192M627.5 183V192M628.5 183V190M629.5 183V192M630.5 183V192M631.5 183V190M632.5 183V192M633.5 183V190M634.5 183V190M635.5 183V192M636.5 183V192M637.5 183V192M638.5 183V190M639.5 186V190M640.5 183V192M641.5 183V192M642.5 183V192M643.5 183V190M644.5 181V192M645.5 183V190M646.5 183V190M647.5 183V192M648.5 183V190M649.5 183V190M650.5 181V190M651.5 183V190M652.5 183V190M653.5 183V190M654.5 183V190M655.5 183V190M656.5 181V190M657.5 181V190M658.5 181V190M659.5 181V190M660.5 183V190M661.5 183V190M662.5 183V190M663.5 183V190M664.5 181V190M665.5 183V192M666.5 183V190M667.5 183V190M668.5 183V190M669.5 181V190M670.5 183V192M671.5 183V190M672.5 183V190M673.5 183V190M674.5 183V192M675.5 181V192M676.5 183V190M677.5 181V190M678.5 183V192M679.5 183V190M680.5 183V190M681.5 181V190M682.5 183V192M683.5 183V190M684.5 183V192M685.5 183V190M686.5 183V192M687.5 181V190M688.5 183V190M689.5 183V192M690.5 181V190M691.5 183V190M692.5 183V190M693.5 183V192M694.5 181V192M695.5 183V192M696.5 183V190M697.5 181V190M698.5 183V192M699.5 183V190M700.5 183V192M701.5 181V192M702.5 183V190M703.5 181V190M704.5 183V190M705.5 181V190M706.5 181V190M707.5 183V190M708.5 181V190M709.5 183V190M710.5 181V190M711.5 181V190M712.5 181V190M713.5 181V190M714.5 181V190M715.5 181V190M716.5 181V190M717.5 181V190M718.5 181V190M719.5 181V190M720.5 181V190M721.5 181V190M722.5 183V190M723.5 181V190M724.5 181V190M725.5 181V190M726.5 181V190M727.5 181V190M728.5 181V190M729.5 181V190M730.5 183V190M731.5 183V190M732.5 181V193M733.5 181V190M734.5 181V190M735.5 183V190M736.5 181V190M737.5 181V190M738.5 181V190M739.5 181V190M740.5 183V190M741.5 183V190M742.5 183V190M743.5 183V190M744.5 181V190M745.5 181V190M746.5 183V190M747.5 181V190M748.5 183V190M749.5 181V190M750.5 183V190M751.5 181V190M752.5 181V190M753.5 181V190M754.5 181V190M755.5 181V190M756.5 181V190M757.5 181V190M758.5 181V190M759.5 181V190M760.5 181V190M761.5 183V190M762.5 181V190M763.5 183V190M764.5 181V190M765.5 181V190M766.5 183V190M767.5 181V190M768.5 181V190M769.5 181V190M770.5 183V190M771.5 181V193M772.5 181V190M773.5 181V190M774.5 181V190M775.5 181V190M776.5 181V190M777.5 181V190M778.5 181V190M779.5 181V190M780.5 181V190M781.5 181V190M782.5 181V190M783.5 183V190M784.5 181V190M785.5 181V190M786.5 181V190M787.5 181V190M788.5 183V190M789.5 181V193M790.5 181V190M791.5 181V190M792.5 181V190M793.5 181V190M794.5 181V190M795.5 181V190M796.5 181V190M797.5 181V190M798.5 181V190M799.5 181V193M800.5 181V192M801.5 181V190M802.5 181V190M803.5 183V190M804.5 181V190M805.5 183V190M806.5 183V190M807.5 181V190M808.5 181V190M809.5 181V190M810.5 181V190M811.5 181V190M812.5 181V190M813.5 181V190M814.5 181V190M815.5 181V190M816.5 181V190M817.5 181V190M818.5 181V190M819.5 181V190M820.5 181V190M821.5 183V190M822.5 181V190M823.5 181V190M824.5 181V190M825.5 181V190M826.5 181V190M827.5 181V190M828.5 183V190M829.5 181V190M830.5 181V190M831.5 183V190M832.5 181V190M833.5 181V190M834.5 181V190M835.5 181V190M836.5 181V190M837.5 181V190M838.5 181V190M839.5 181V190M840.5 181V190M841.5 181V192M842.5 181V190M843.5 181V190M844.5 183V190M845.5 181V190M846.5 183V190M847.5 181V190M848.5 181V190M849.5 181V190M850.5 183V190M851.5 181V190M852.5 181V190M853.5 181V190M854.5 181V190M855.5 183V190M856.5 183V190M857.5 181V190M858.5 183V190M859.5 181V190M860.5 183V190M861.5 181V190M862.5 181V190M863.5 181V193M864.5 181V188M865.5 181V190M866.5 181V190M867.5 183V190M868.5 178V190M869.5 181V188M870.5 183V188M871.5 181V188M872.5 181V190M873.5 181V190M874.5 181V188M875.5 181V190M876.5 181V190M877.5 181V190M878.5 181V190M879.5 181V190M880.5 181V190M881.5 181V188M882.5 181V190M883.5 181V188M884.5 181V190M885.5 181V190M886.5 181V188M887.5 181V190M888.5 181V190M889.5 181V190M890.5 181V190M891.5 181V188M892.5 178V188M893.5 181V188M894.5 181V190M895.5 183V188M896.5 181V190M897.5 181V188M898.5 181V190M899.5 181V188M900.5 181V188M901.5 181V190M902.5 181V188M903.5 181V190M904.5 181V190M905.5 178V190M906.5 181V190M907.5 181V188M908.5 181V188M909.5 181V190M910.5 181V190M911.5 181V190M912.5 181V190M913.5 181V190M914.5 181V188M915.5 181V190M916.5 181V188M917.5 181V190M918.5 181V190M919.5 181V190M920.5 181V190M921.5 181V190M922.5 181V190M923.5 181V188M924.5 181V190M925.5 181V190M926.5 181V190M927.5 181V190M928.5 181V188M929.5 181V188M930.5 181V190M931.5 181V188M932.5 181V190M933.5 181V188M934.5 183V188M935.5 181V190M936.5 181V190M937.5 181V188M938.5 181V188M939.5 181V190M940.5 181V188M941.5 181V188M942.5 181V190M943.5 181V190M944.5 181V190M945.5 181V188M946.5 181V188M947.5 181V188M948.5 181V190M949.5 181V188M950.5 181V190M951.5 181V190M952.5 181V188M953.5 181V188M954.5 181V190M955.5 181V190M956.5 181V188M957.5 181V190M958.5 181V188M959.5 181V188M960.5 181V190M961.5 181V190M962.5 181V188M963.5 181V190M964.5 183V188M965.5 181V188M966.5 181V188M967.5 181V190M968.5 181V190M969.5 181V190M970.5 181V188M971.5 183V190M972.5 181V190M973.5 181V190M974.5 181V190M975.5 181V190M976.5 181V188M977.5 181V190M978.5 181V190M979.5 181V190M980.5 181V190M981.5 181V190M982.5 178V190M983.5 181V190M984.5 181V188M985.5 181V190M986.5 181V190M987.5 181V190M988.5 181V190M989.5 181V190M990.5 181V191M991.5 181V188M992.5 181V188M993.5 181V188M994.5 181V190M995.5 181V190M996.5 181V190M997.5 181V190M998.5 181V190M999.5 178V188M1000.5 181V190M1001.5 181V190M1002.5 181V190M1003.5 181V190M1004.5 181V190M1005.5 181V190M1006.5 181V188M1007.5 181V188M1008.5 181V188M1009.5 181V188M1010.5 181V190M1011.5 181V190M1012.5 181V188M1013.5 181V190M1014.5 181V190M1015.5 181V190M1016.5 181V190M1017.5 181V190M1018.5 181V188M1019.5 181V188M1020.5 181V188M234.5 183V195M235.5 186V225M236.5 225V296M237.5 292V325M238.5 321V328M239.5 318V328M240.5 318V325M241.5 318V328M242.5 321V328M243.5 316V328"/>
</g>
<g fill="none" stroke="#f4f4f4" stroke-width="1"><path d="M121.5 30V656" stroke-dasharray="1 12"/><path d="M121.5 18V23" stroke-dasharray="1 1"/><path d="M121.5 662V667" stroke-dasharray="1 1"/><path d="M221.5 30V656" stroke-dasharray="1 12"/><path d="M221.5 18V23" stroke-dasharray="1 1"/><path d="M221.5 662V667" stroke-dasharray="1 1"/><path d="M321.5 30V656" stroke-dasharray="1 12"/><path d="M321.5 18V23" stroke-dasharray="1 1"/><path d="M321.5 662V667" stroke-dasharray="1 1"/><path d="M421.5 30V656" stroke-dasharray="1 12"/><path d="M421.5 18V23" stroke-dasharray="1 1"/><path d="M421.5 662V667" stroke-dasharray="1 1"/><path d="M621.5 30V656" stroke-dasharray="1 12"/><path d="M621.5 18V23" stroke-dasharray="1 1"/><path d="M621.5 662V667" stroke-dasharray="1 1"/><path d="M721.5 30V656" stroke-dasharray="1 12"/><path d="M721.5 18V23" stroke-dasharray="1 1"/><path d="M721.5 662V667" stroke-dasharray="1 1"/><path d="M821.5 30V656" stroke-dasharray="1 12"/><path d="M821.5 18V23" stroke-dasharray="1 1"/><path d="M821.5 662V667" stroke-dasharray="1 1"/><path d="M921.5 30V656" stroke-dasharray="1 12"/><path d="M921.5 18V23" stroke-dasharray="1 1"/><path d="M921.5 662V667" stroke-dasharray="1 1"/><path d="M41 82.5H1003" stroke-dasharray="1 19"/><path d="M21 82.5H26" stroke-dasharray="1 1"/><path d="M1016 82.5H1021" stroke-dasharray="1 1"/><path d="M41 147.5H1003" stroke-dasharray="1 19"/><path d="M21 147.5H26" stroke-dasharray="1 1"/><path d="M1016 147.5H1021" stroke-dasharray="1 1"/><path d="M41 212.5H1003" stroke-dasharray="1 19"/><path d="M21 212.5H26" stroke-dasharray="1 1"/><path d="M1016 212.5H1021" stroke-dasharray="1 1"/><path d="M41 277.5H1003" stroke-dasharray="1 19"/><path d="M21 277.5H26" stroke-dasharray="1 1"/><path d="M1016 277.5H1021" stroke-dasharray="1 1"/><path d="M41 407.5H1003" stroke-dasharray="1 19"/><path d="M21 407.5H26" stroke-dasharray="1 1"/><path d="M1016 407.5H1021" stroke-dasharray="1 1"/><path d="M41 472.5H1003" stroke-dasharray="1 19"/><path d="M21 472.5H26" stroke-dasharray="1 1"/><path d="M1016 472.5H1021" stroke-dasharray="1 1"/><path d="M41 537.5H1003" stroke-dasharray="1 19"/><path d="M21 537.5H26" stroke-dasharray="1 1"/><path d="M1016 537.5H1021" stroke-dasharray="1 1"/><path d="M41 602.5H1003" stroke-dasharray="1 19"/><path d="M21 602.5H26" stroke-dasharray="1 1"/><path d="M1016 602.5H1021" stroke-dasharray="1 1"/><path d="M41.5 17V18M41.5 19V20M41.5 665V666M41.5 667V668M61.5 17V18M61.5 19V20M61.5 665V666M61.5 667V668M81.5 17V18M81.5 19V20M81.5 665V666M81.5 667V668M101.5 17V18M101.5 19V20M101.5 665V666M101.5 667V668M141.5 17V18M141.5 19V20M141.5 665V666M141.5 667V668M161.5 17V18M161.5 19V20M161.5 665V666M161.5 667V668M181.5 17V18M181.5 19V20M181.5 665V666M181.5 667V668M201.5 17V18M201.5 19V20M201.5 665V666M201.5 667V668M241.5 17V18M241.5 19V20M241.5 665V666M241.5 667V668M261.5 17V18M261.5 19V20M261.5 665V666M261.5 667V668M281.5 17V18M281.5 19V20M281.5 665V666M281.5 667V668M301.5 17V18M301.5 19V20M301.5 665V666M301.5 667V668M341.5 17V18M341.5 19V20M341.5 665V666M341.5 667V668M361.5 17V18M361.5 19V20M361.5 665V666M361.5 667V668M381.5 17V18M381.5 19V20M381.5 665V666M381.5 667V668M401.5 17V18M401.5 19V20M401.5 665V666M401.5 667V668M441.5 17V18M441.5 19V20M441.5 665V666M441.5 667V668M461.5 17V18M461.5 19V20M461.5 665V666M461.5 667V668M481.5 17V18M481.5 19V20M481.5 665V666M481.5 667V668M501.5 17V18M501.5 19V20M501.5 665V666M501.5 667V668M541.5 17V18M541.5 19V20M541.5 665V666M541.5 667V668M561.5 17V18M561.5 19V20M561.5 665V666M561.5 667V668M581.5 17V18M581.5 19V20M581.5 665V666M581.5 667V668M601.5 17V18M601.5 19V20M601.5 665V666M601.5 667V668M641.5 17V18M641.5 19V20M641.5 665V666M641.5 667V668M661.5 17V18M661.5 19V20M661.5 665V666M661.5 667V668M681.5 17V18M681.5 19V20M681.5 665V666M681.5 667V668M701.5 17V18M701.5 19V20M701.5 665V666M701.5 667V668M741.5 17V18M741.5 19V20M741.5 665V666M741.5 667V668M761.5 17V18M761.5 19V20M761.5 665V666M761.5 667V668M781.5 17V18M781.5 19V20M781.5 665V666M781.5 667V668M801.5 17V18M801.5 19V20M801.5 665V666M801.5 667V668M841.5 17V18M841.5 19V20M841.5 665V666M841.5 667V668M861.5 17V18M861.5 19V20M861.5 665V666M861.5 667V668M881.5 17V18M881.5 19V20M881.5 665V666M881.5 667V668M901.5 17V18M901.5 19V20M901.5 665V666M901.5 667V668M941.5 17V18M941.5 19V20M941.5 665V666M941.5 667V668M961.5 17V18M961.5 19V20M961.5 665V666M961.5 667V668M981.5 17V18M981.5 19V20M981.5 665V666M981.5 667V668M1001.5 17V18M1001.5 19V20M1001.5 665V666M1001.5 667V668M21 30.5H22M23 30.5H24M1018 30.5H1019M1020 30.5H1021M21 43.5H22M23 43.5H24M1018 43.5H1019M1020 43.5H1021M21 56.5H22M23 56.5H24M1018 56.5H1019M1020 56.5H1021M21 69.5H22M23 69.5H24M1018 69.5H1019M1020 69.5H1021M21 95.5H22M23 95.5H24M1018 95.5H1019M1020 95.5H1021M21 108.5H22M23 108.5H24M1018 108.5H1019M1020 108.5H1021M21 121.5H22M23 121.5H24M1018 121.5H1019M1020 121.5H1021M21 134.5H22M23 134.5H24M1018 134.5H1019M1020 134.5H1021M21 160.5H22M23 160.5H24M1018 160.5H1019M1020 160.5H1021M21 173.5H22M23 173.5H24M1018 173.5H1019M1020 173.5H1021M21 186.5H22M23 186.5H24M1018 186.5H1019M1020 186.5H1021M21 199.5H22M23 199.5H24M1018 199.5H1019M1020 199.5H1021M21 225.5H22M23 225.5H24M1018 225.5H1019M1020 225.5H1021M21 238.5H22M23 238.5H24M1018 238.5H1019M1020 238.5H1021M21 251.5H22M23 251.5H24M1018 251.5H1019M1020 251.5H1021M21 264.5H22M23 264.5H24M1018 264.5H1019M1020 264.5H1021M21 290.5H22M23 290.5H24M1018 290.5H1019M1020 290.5H1021M21 303.5H22M23 303.5H24M1018 303.5H1019M1020 303.5H1021M21 316.5H22M23 316.5H24M1018 316.5H1019M1020 316.5H1021M21 329.5H22M23 329.5H24M1018 329.5H1019M1020 329.5H1021M21 355.5H22M23 355.5H24M1018 355.5H1019M1020 355.5H1021M21 368.5H22M23 368.5H24M1018 368.5H1019M1020 368.5H1021M21 381.5H22M23 381.5H24M1018 381.5H1019M1020 381.5H1021M21 394.5H22M23 394.5H24M1018 394.5H1019M1020 394.5H1021M21 420.5H22M23 420.5H24M1018 420.5H1019M1020 420.5H1021M21 433.5H22M23 433.5H24M1018 433.5H1019M1020 433.5H1021M21 446.5H22M23 446.5H24M1018 446.5H1019M1020 446.5H1021M21 459.5H22M23 459.5H24M1018 459.5H1019M1020 459.5H1021M21 485.5H22M23 485.5H24M1018 485.5H1019M1020 485.5H1021M21 498.5H22M23 498.5H24M1018 498.5H1019M1020 498.5H1021M21 511.5H22M23 511.5H24M1018 511.5H1019M1020 511.5H1021M21 524.5H22M23 524.5H24M1018 524.5H1019M1020 524.5H1021M21 550.5H22M23 550.5H24M1018 550.5H1019M1020 550.5H1021M21 563.5H22M23 563.5H24M1018 563.5H1019M1020 563.5H1021M21 576.5H22M23 576.5H24M1018 576.5H1019M1020 576.5H1021M21 589.5H22M23 589.5H24M1018 589.5H1019M1020 589.5H1021M21 615.5H22M23 615.5H24M1018 615.5H1019M1020 615.5H1021M21 628.5H22M23 628.5H24M1018 628.5H1019M1020 628.5H1021M21 641.5H22M23 641.5H24M1018 641.5H1019M1020 641.5H1021M21 654.5H22M23 654.5H24M1018 654.5H1019M1020 654.5H1021"/><path d="M21 342.5H1021" stroke-dasharray="1 1"/><path d="M521.5 24V668" stroke-dasharray="1 1"/><path d="M41.5 339V340M41.5 341V344M41.5 345V346"/><path d="M61.5 339V340M61.5 341V344M61.5 345V346"/><path d="M81.5 339V340M81.5 341V344M81.5 345V346"/><path d="M101.5 339V340M101.5 341V344M101.5 345V346"/><path d="M121.5 336V349" stroke-dasharray="1 1"/><path d="M141.5 339V340M141.5 341V344M141.5 345V346"/><path d="M161.5 339V340M161.5 341V344M161.5 345V346"/><path d="M181.5 339V340M181.5 341V344M181.5 345V346"/><path d="M201.5 339V340M201.5 341V344M201.5 345V346"/><path d="M221.5 336V349" stroke-dasharray="1 1"/><path d="M241.5 339V340M241.5 341V344M241.5 345V346"/><path d="M261.5 339V340M261.5 341V344M261.5 345V346"/><path d="M281.5 339V340M281.5 341V344M281.5 345V346"/><path d="M301.5 339V340M301.5 341V344M301.5 345V346"/><path d="M321.5 336V349" stroke-dasharray="1 1"/><path d="M341.5 339V340M341.5 341V344M341.5 345V346"/><path d="M361.5 339V340M361.5 341V344M361.5 345V346"/><path d="M381.5 339V340M381.5 341V344M381.5 345V346"/><path d="M401.5 339V340M401.5 341V344M401.5 345V346"/><path d="M421.5 336V349" stroke-dasharray="1 1"/><path d="M441.5 339V340M441.5 341V344M441.5 345V346"/><path d="M461.5 339V340M461.5 341V344M461.5 345V346"/><path d="M481.5 339V340M481.5 341V344M481.5 345V346"/><path d="M501.5 339V340M501.5 341V344M501.5 345V346"/><path d="M541.5 339V340M541.5 341V344M541.5 345V346"/><path d="M561.5 339V340M561.5 341V344M561.5 345V346"/><path d="M581.5 339V340M581.5 341V344M581.5 345V346"/><path d="M601.5 339V340M601.5 341V344M601.5 345V346"/><path d="M621.5 336V349" stroke-dasharray="1 1"/><path d="M641.5 339V340M641.5 341V344M641.5 345V346"/><path d="M661.5 339V340M661.5 341V344M661.5 345V346"/><path d="M681.5 339V340M681.5 341V344M681.5 345V346"/><path d="M701.5 339V340M701.5 341V344M701.5 345V346"/><path d="M721.5 336V349" stroke-dasharray="1 1"/><path d="M741.5 339V340M741.5 341V344M741.5 345V346"/><path d="M761.5 339V340M761.5 341V344M761.5 345V346"/><path d="M781.5 339V340M781.5 341V344M781.5 345V346"/><path d="M801.5 339V340M801.5 341V344M801.5 345V346"/><path d="M821.5 336V349" stroke-dasharray="1 1"/><path d="M841.5 339V340M841.5 341V344M841.5 345V346"/><path d="M861.5 339V340M861.5 341V344M861.5 345V346"/><path d="M881.5 339V340M881.5 341V344M881.5 345V346"/><path d="M901.5 339V340M901.5 341V344M901.5 345V346"/><path d="M921.5 336V349" stroke-dasharray="1 1"/><path d="M941.5 339V340M941.5 341V344M941.5 345V346"/><path d="M961.5 339V340M961.5 341V344M961.5 345V346"/><path d="M981.5 339V340M981.5 341V344M981.5 345V346"/><path d="M1001.5 339V340M1001.5 341V344M1001.5 345V346"/><path d="M518 30.5H519M520 30.5H523M524 30.5H525"/><path d="M518 43.5H519M520 43.5H523M524 43.5H525"/><path d="M518 56.5H519M520 56.5H523M524 56.5H525"/><path d="M518 69.5H519M520 69.5H523M524 69.5H525"/><path d="M515 82.5H528" stroke-dasharray="1 1"/><path d="M518 95.5H519M520 95.5H523M524 95.5H525"/><path d="M518 108.5H519M520 108.5H523M524 108.5H525"/><path d="M518 121.5H519M520 121.5H523M524 121.5H525"/><path d="M518 134.5H519M520 134.5H523M524 134.5H525"/><path d="M515 147.5H528" stroke-dasharray="1 1"/><path d="M518 160.5H519M520 160.5H523M524 160.5H525"/><path d="M518 173.5H519M520 173.5H523M524 173.5H525"/><path d="M518 186.5H519M520 186.5H523M524 186.5H525"/><path d="M518 199.5H519M520 199.5H523M524 199.5H525"/><path d="M515 212.5H528" stroke-dasharray="1 1"/><path d="M518 225.5H519M520 225.5H523M524 225.5H525"/><path d="M518 238.5H519M520 238.5H523M524 238.5H525"/><path d="M518 251.5H519M520 251.5H523M524 251.5H525"/><path d="M518 264.5H519M520 264.5H523M524 264.5H525"/><path d="M515 277.5H528" stroke-dasharray="1 1"/><path d="M518 290.5H519M520 290.5H523M524 290.5H525"/><path d="M518 303.5H519M520 303.5H523M524 303.5H525"/><path d="M518 316.5H519M520 316.5H523M524 316.5H525"/><path d="M518 329.5H519M520 329.5H523M524 329.5H525"/><path d="M518 355.5H519M520 355.5H523M524 355.5H525"/><path d="M518 368.5H519M520 368.5H523M524 368.5H525"/><path d="M518 381.5H519M520 381.5H523M524 381.5H525"/><path d="M518 394.5H519M520 394.5H523M524 394.5H525"/><path d="M515 407.5H528" stroke-dasharray="1 1"/><path d="M518 420.5H519M520 420.5H523M524 420.5H525"/><path d="M518 433.5H519M520 433.5H523M524 433.5H525"/><path d="M518 446.5H519M520 446.5H523M524 446.5H525"/><path d="M518 459.5H519M520 459.5H523M524 459.5H525"/><path d="M515 472.5H528" stroke-dasharray="1 1"/><path d="M518 485.5H519M520 485.5H523M524 485.5H525"/><path d="M518 498.5H519M520 498.5H523M524 498.5H525"/><path d="M518 511.5H519M520 511.5H523M524 511.5H525"/><path d="M518 524.5H519M520 524.5H523M524 524.5H525"/><path d="M515 537.5H528" stroke-dasharray="1 1"/><path d="M518 550.5H519M520 550.5H523M524 550.5H525"/><path d="M518 563.5H519M520 563.5H523M524 563.5H525"/><path d="M518 576.5H519M520 576.5H523M524 576.5H525"/><path d="M518 589.5H519M520 589.5H523M524 589.5H525"/><path d="M515 602.5H528" stroke-dasharray="1 1"/><path d="M518 615.5H519M520 615.5H523M524 615.5H525"/><path d="M518 628.5H519M520 628.5H523M524 628.5H525"/><path d="M518 641.5H519M520 641.5H523M524 641.5H525"/><path d="M518 654.5H519M520 654.5H523M524 654.5H525"/></g>
<path d="M20.5 16V668.5H1021.5V16.5H920" fill="none" stroke="#5282be"/>
<path d="M20 16.5H121" fill="none" stroke="#5282be"/>
<path d="M121 16H921" fill="none" stroke="#5282be" stroke-width="2"/>
<path d="M121.5 16V0.5H920.5V16" fill="none" stroke="#5282be"/>
<path d="M282 7.5H762" stroke="#00d8d8" fill="none"/>
<rect x="519" y="1" width="5" height="14" fill="#fff"/><rect x="521" y="3" width="1" height="10" fill="#000"/><rect x="521" y="3" width="1" height="2" fill="#ff9900"/><rect x="518" y="1" width="7" height="1" fill="#ff9900"/>
<path d="M516 17H527.6L521.8 23.6Z" fill="#ff9900" shape-rendering="geometricPrecision"/>
<g shape-rendering="geometricPrecision">
<path d="M21 30.5L27 24H37.2L38.2 25V36L37.2 37H27Z" fill="#ff9900"/>
<path d="M27 25H37V27H33V36H31V27H27Z" fill="#000" shape-rendering="crispEdges"/>
<path d="M122 10.5L127 5H133L134 6V15L133 16H127Z" fill="#ff9900"/>
<path d="M127 6H133V7.3H131V15H129V7.3H127Z" fill="#000" shape-rendering="crispEdges"/>
<path d="M0.5 71.5 H12.5 L20 79.5 L12.5 87.5 H0.5 Z" fill="none" stroke="#ff50ff" stroke-width="1.3" stroke-linejoin="round"/>
<text x="7.5" y="84.5" font-size="14.5" text-anchor="middle" fill="#b400b4" stroke="#b400b4" stroke-width="0.1">3</text>
<defs><linearGradient id="g2" x1="0" y1="0" x2="0" y2="1"><stop offset="0" stop-color="#50f4f4"/><stop offset="0.2" stop-color="#00e0e0"/><stop offset="0.75" stop-color="#00d8d8"/><stop offset="1" stop-color="#009090"/></linearGradient></defs>
<path d="M0.5 178.5 H12.5 L20 186.5 L12.5 194.5 H0.5 Z" fill="url(#g2)" stroke="#00d0d0" stroke-width="1.3" stroke-linejoin="round"/>
<text x="7.5" y="191.5" font-size="14.5" text-anchor="middle" fill="#000" stroke="#000" stroke-width="0.5">2</text>
<path d="M0.5 658.5 H12.5 L20 666.5 L12.5 674.5 H0.5 Z" fill="none" stroke="#30e030" stroke-width="1.3" stroke-linejoin="round"/>
<text x="7.5" y="671.5" font-size="14.5" text-anchor="middle" fill="#00c000" stroke="#00c000" stroke-width="0.1">4</text>
</g>
<g shape-rendering="geometricPrecision" opacity="0.999">
<text x="0" y="14.6" font-size="20" fill="#f4f4ff" stroke="#f4f4ff" stroke-width="0.7" textLength="31" lengthAdjust="spacing" font-family="Liberation Serif">Tek</text>
<text x="35.5" y="13" font-size="15.4" fill="#f4f4f4" stroke="#f4f4f4" stroke-width="0.45" textLength="29.5" lengthAdjust="spacing">Run</text>
<text x="925.5" y="13" font-size="15.4" fill="#f4f4f4" stroke="#f4f4f4" stroke-width="0.45" textLength="38.5" lengthAdjust="spacing">Trig?</text>
<rect x="20.5" y="670.5" width="554" height="20" rx="5.5" fill="none" stroke="#e8e8e8" stroke-width="1"/>
<rect x="582.5" y="670.5" width="148" height="37" rx="5.5" fill="none" stroke="#e8e8e8" stroke-width="1"/>
<rect x="737.5" y="670.5" width="107" height="37" rx="5.5" fill="none" stroke="#e8e8e8" stroke-width="1"/>
<rect x="851.5" y="670.5" width="170" height="37" rx="5.5" fill="none" stroke="#e8e8e8" stroke-width="1"/>
<rect x="909.5" y="729.5" width="112" height="36" rx="5.5" fill="none" stroke="#e8e8e8" stroke-width="1"/>
<rect x="165" y="672.8" width="25" height="16.1" rx="8" fill="#00e0e8"/>
<text x="177.5" y="686" font-size="15.4" text-anchor="middle" fill="#000" stroke="#000" stroke-width="0.8">2</text>
<text x="208" y="686" font-size="15.4" fill="#00e0e8" stroke="#00e0e8" stroke-width="0.45" textLength="53" lengthAdjust="spacing">200mV</text>
<text x="269.5" y="686" font-size="15" fill="#00e0e8" stroke="#00e0e8" stroke-width="0.45" textLength="11.5" lengthAdjust="spacing">Ω</text>
<text x="283.5" y="682" font-size="8.5" fill="#00e0e8" stroke="#00e0e8" stroke-width="0.2">B</text>
<text x="286" y="686.5" font-size="8.5" fill="#00e0e8" stroke="#00e0e8" stroke-width="0.2" textLength="6.5" lengthAdjust="spacing">W</text>
<rect x="304" y="672.8" width="25" height="16.1" rx="8" fill="#aa00aa"/>
<text x="316.5" y="686" font-size="15.4" text-anchor="middle" fill="#000" stroke="#000" stroke-width="0.8">3</text>
<text x="347" y="686" font-size="15.4" fill="#aa00aa" stroke="#aa00aa" stroke-width="0.45" textLength="53" lengthAdjust="spacing">200mV</text>
<text x="408.5" y="686" font-size="15" fill="#aa00aa" stroke="#aa00aa" stroke-width="0.45" textLength="11.5" lengthAdjust="spacing">Ω</text>
<text x="422.5" y="682" font-size="8.5" fill="#aa00aa" stroke="#aa00aa" stroke-width="0.2">B</text>
<text x="425" y="686.5" font-size="8.5" fill="#aa00aa" stroke="#aa00aa" stroke-width="0.2" textLength="6.5" lengthAdjust="spacing">W</text>
<rect x="443" y="672.8" width="25" height="16.1" rx="8" fill="#00a000"/>
<text x="455.5" y="686" font-size="15.4" text-anchor="middle" fill="#000" stroke="#000" stroke-width="0.8">4</text>
<path d="M478.5 675.5V685M475 681.5L478.5 685.5L482 681.5" stroke="#00a000" stroke-width="1.3" fill="none"/>
<text x="486.5" y="686" font-size="15.4" fill="#00a000" stroke="#00a000" stroke-width="0.45" textLength="52.5" lengthAdjust="spacing">100mV</text>
<text x="547.5" y="686" font-size="15" fill="#00a000" stroke="#00a000" stroke-width="0.45" textLength="11.5" lengthAdjust="spacing">Ω</text>
<text x="561.5" y="682" font-size="8.5" fill="#00a000" stroke="#00a000" stroke-width="0.2">B</text>
<text x="564" y="686.5" font-size="8.5" fill="#00a000" stroke="#00a000" stroke-width="0.2" textLength="6.5" lengthAdjust="spacing">W</text>
<text x="589.5" y="686" font-size="15.4" fill="#f4f4f4" stroke="#f4f4f4" stroke-width="0.45" textLength="53" lengthAdjust="spacing">2.00µs</text>
<path d="M588 691H598L599 692V703L598 704H588L587 703V692Z" fill="#ff9900"/>
<path d="M588 692H598V694H594V703H592V694H588Z" fill="#000" shape-rendering="crispEdges"/>
<path d="M600 697.5H606" stroke="#ff9900" stroke-width="1" fill="none" shape-rendering="crispEdges"/>
<path d="M605 693.8L609 697.5L605 701.2Z" fill="#ff9900"/>
<path d="M610 694H621.6L615.8 700.6Z" fill="#ff9900"/>
<text x="623.8" y="702.7" font-size="15.4" fill="#ff9900" stroke="#ff9900" stroke-width="0.45" textLength="95.2" lengthAdjust="spacing">1.806000ms</text>
<text x="743.5" y="686" font-size="15.4" fill="#f4f4f4" stroke="#f4f4f4" stroke-width="0.45" textLength="70.5" lengthAdjust="spacing">2.50GS/s</text>
<text x="743.5" y="702.7" font-size="15.4" fill="#f4f4f4" stroke="#f4f4f4" stroke-width="0.45" textLength="79.5" lengthAdjust="spacing">5M points</text>
<rect x="882" y="672.8" width="25" height="16.1" rx="8" fill="#f6ec00"/>
<text x="894.5" y="686" font-size="15.4" text-anchor="middle" fill="#000" stroke="#000" stroke-width="0.8">1</text>
<path d="M920 685H924L928 675.5H932.5" stroke="#f4f4f4" stroke-width="1.5" fill="none"/>
<text x="966" y="686" font-size="15.4" fill="#f4f4f4" stroke="#f4f4f4" stroke-width="0.45" textLength="49" lengthAdjust="spacing">2.10 V</text>
<text x="916" y="745.7" font-size="15.4" fill="#f4f4f4" stroke="#f4f4f4" stroke-width="0.45" textLength="100" lengthAdjust="spacing">15 Nov 2023</text>
<text x="916" y="761.7" font-size="15.4" fill="#f4f4f4" stroke="#f4f4f4" stroke-width="0.45" textLength="69" lengthAdjust="spacing">15:08:57</text>
<rect x="20.5" y="714.5" width="114" height="53" rx="4.5" fill="#535553" stroke="#6e706e" stroke-width="1"/>
<text x="60" y="737.7" font-size="15.4" fill="#f4f4f4" stroke="#f4f4f4" stroke-width="0.45" textLength="35" lengthAdjust="spacing">Save</text>
<text x="25" y="754.7" font-size="15.4" fill="#f4f4f4" stroke="#f4f4f4" stroke-width="0.45" textLength="105" lengthAdjust="spacing">Screen Image</text>
<rect x="138.5" y="714.5" width="114" height="53" rx="4.5" fill="#535553" stroke="#6e706e" stroke-width="1"/>
<text x="178" y="737.7" font-size="15.4" fill="#f4f4f4" stroke="#f4f4f4" stroke-width="0.45" textLength="35" lengthAdjust="spacing">Save</text>
<text x="156" y="754.7" font-size="15.4" fill="#f4f4f4" stroke="#f4f4f4" stroke-width="0.45" textLength="79" lengthAdjust="spacing">Waveform</text>
<rect x="256.5" y="714.5" width="114" height="53" rx="4.5" fill="#535553" stroke="#6e706e" stroke-width="1"/>
<text x="296" y="737.7" font-size="15.4" fill="#f4f4f4" stroke="#f4f4f4" stroke-width="0.45" textLength="35" lengthAdjust="spacing">Save</text>
<text x="290.5" y="754.7" font-size="15.4" fill="#f4f4f4" stroke="#f4f4f4" stroke-width="0.45" textLength="46" lengthAdjust="spacing">Setup</text>
<rect x="374.5" y="714.5" width="114" height="53" rx="4.5" fill="#535553" stroke="#6e706e" stroke-width="1"/>
<text x="410" y="737.7" font-size="15.4" fill="#f4f4f4" stroke="#f4f4f4" stroke-width="0.45" textLength="43" lengthAdjust="spacing">Recall</text>
<text x="392" y="754.7" font-size="15.4" fill="#f4f4f4" stroke="#f4f4f4" stroke-width="0.45" textLength="79" lengthAdjust="spacing">Waveform</text>
<rect x="492.5" y="714.5" width="114" height="53" rx="4.5" fill="#535553" stroke="#6e706e" stroke-width="1"/>
<text x="528" y="737.7" font-size="15.4" fill="#f4f4f4" stroke="#f4f4f4" stroke-width="0.45" textLength="43" lengthAdjust="spacing">Recall</text>
<text x="526.5" y="754.7" font-size="15.4" fill="#f4f4f4" stroke="#f4f4f4" stroke-width="0.45" textLength="46" lengthAdjust="spacing">Setup</text>
<rect x="610.5" y="714.5" width="114" height="53" rx="4.5" fill="#535553" stroke="#6e706e" stroke-width="1"/>
<rect x="728.5" y="714.5" width="114" height="53" rx="4.5" fill="#535553" stroke="#6e706e" stroke-width="1"/>
<text x="772.5" y="737.7" font-size="15.4" fill="#f4f4f4" stroke="#f4f4f4" stroke-width="0.45" textLength="26" lengthAdjust="spacing">File</text>
<text x="755" y="754.7" font-size="15.4" fill="#f4f4f4" stroke="#f4f4f4" stroke-width="0.45" textLength="61" lengthAdjust="spacing">Utilities</text>
<text x="640.5" y="728.8" font-size="15.4" fill="#f4f4f4" stroke="#f4f4f4" stroke-width="0.45" textLength="53" lengthAdjust="spacing">Assign</text>
<defs><linearGradient id="gs" x1="0" y1="0" x2="1" y2="1"><stop offset="0" stop-color="#ffffff"/><stop offset="0.7" stop-color="#f4f4f4"/><stop offset="1" stop-color="#b0b0b0"/></linearGradient></defs>
<path d="M646 733.3H671.5Q673.6 733.3 673.6 735.3V745Q673.6 747 671.5 747H646Q639 747 639 740.1Q639 733.3 646 733.3Z" fill="#8a8a8a"/>
<path d="M646 733.3H671Q672.6 733.3 672.6 735V744.5Q672.6 746 671 746H646Q639 746 639 739.6Q639 733.3 646 733.3Z" fill="url(#gs)"/>
<text x="643.5" y="744.3" font-size="11.5" fill="#000" stroke="#000" stroke-width="0" textLength="26" lengthAdjust="spacing" font-weight="bold">Save</text>
<text x="680.5" y="745.4" font-size="15.4" fill="#f4f4f4" stroke="#f4f4f4" stroke-width="0.45" textLength="14.5" lengthAdjust="spacing">to</text>
<rect x="641" y="750" width="52" height="16" fill="#086cff"/>
<text x="644" y="763" font-size="15.4" fill="#fff" stroke="#fff" stroke-width="0.45" textLength="46" lengthAdjust="spacing">Image</text>
</g>
</svg>
</body></html>
